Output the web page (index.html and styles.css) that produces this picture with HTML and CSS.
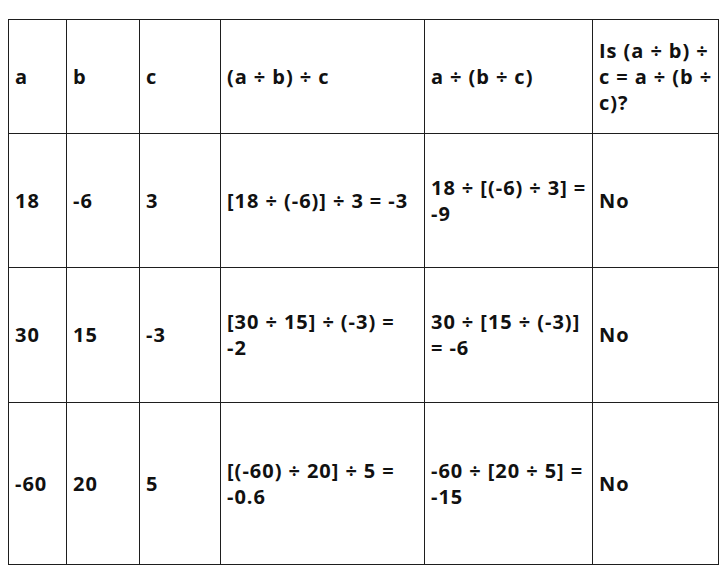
FILE: index.html
```html
<!DOCTYPE html>
<html lang="en">
<head>
<meta charset="utf-8">
<title>Division associativity</title>
<link rel="stylesheet" href="styles.css">
</head>
<body>
<div class="page">
  <table class="grid">
    <colgroup>
      <col class="c1"><col class="c2"><col class="c3"><col class="c4"><col class="c5"><col class="c6">
    </colgroup>
    <tr class="r0">
      <td>a</td><td>b</td><td>c</td><td>(a ÷ b) ÷ c</td><td>a ÷ (b ÷ c)</td><td>Is (a ÷ b) ÷<br>c = a ÷ (b ÷<br>c)?</td>
    </tr>
    <tr class="r1">
      <td>18</td><td>-6</td><td>3</td><td>[18 ÷ (-6)] ÷ 3 = -3</td><td>18 ÷ [(-6) ÷ 3] =<br>-9</td><td>No</td>
    </tr>
    <tr class="r2">
      <td>30</td><td>15</td><td>-3</td><td>[30 ÷ 15] ÷ (-3) =<br>-2</td><td>30 ÷ [15 ÷ (-3)]<br>= -6</td><td>No</td>
    </tr>
    <tr class="r3">
      <td>-60</td><td>20</td><td>5</td><td>[(-60) ÷ 20] ÷ 5 =<br>-0.6</td><td>-60 ÷ [20 ÷ 5] =<br>-15</td><td>No</td>
    </tr>
  </table>
</div>
</body>
</html>
```
FILE: styles.css
```css
html, body {
  margin: 0;
  padding: 0;
  background: #ffffff;
}
.page {
  padding: 19px 0 0 8px;
}
.grid {
  border-collapse: collapse;
  table-layout: fixed;
  width: 710px;
  font-family: "Open Sans", "Liberation Sans", sans-serif;
  font-weight: 700;
  font-size: 20px;
  line-height: 26px;
  letter-spacing: 1px;
  word-spacing: -0.2px;
  color: #111111;
}
.grid td {
  border: 1px solid #1e1e1e;
  padding: 0 6px;
  vertical-align: middle;
  text-align: left;
  white-space: nowrap;
}
.c1 { width: 58px; }
.c2 { width: 73px; }
.c3 { width: 81px; }
.c4 { width: 204px; }
.c5 { width: 168px; }
.c6 { width: 126px; }
.r0 { height: 114px; }
.r1 { height: 134px; }
.r2 { height: 135px; }
.r3 { height: 162px; }
```
